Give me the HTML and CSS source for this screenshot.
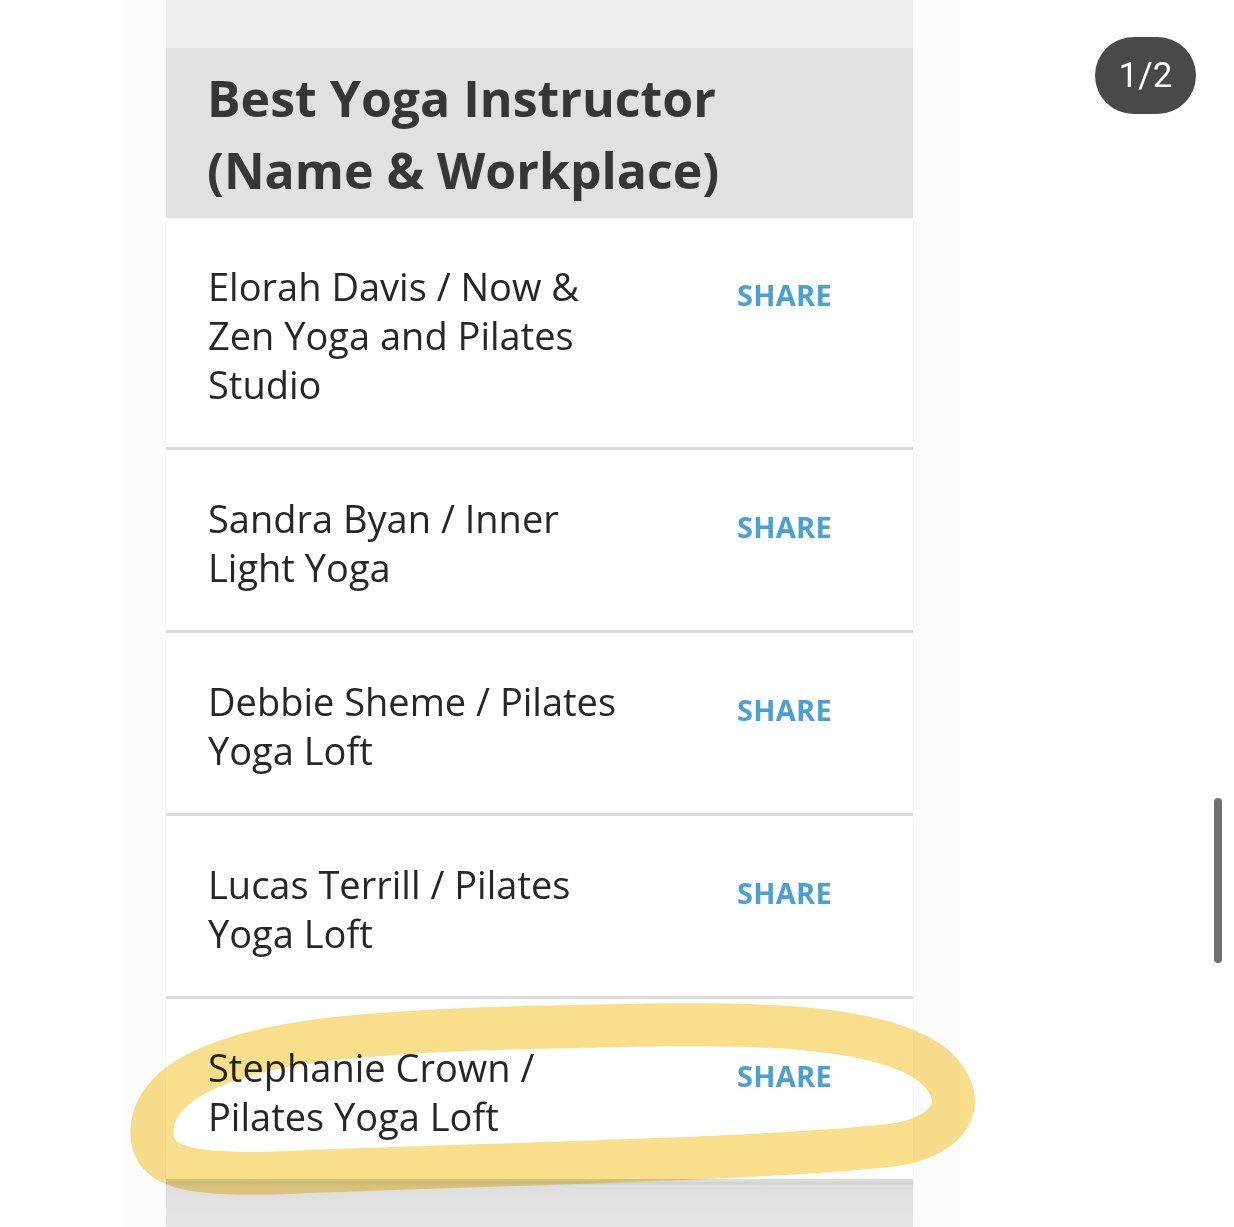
FILE: index.html
```html
<!DOCTYPE html>
<html lang="en">
<head>
<meta charset="utf-8">
<title>Best Yoga Instructor</title>
<link rel="stylesheet" href="styles.css">
</head>
<body>
<div class="stage">
  <div class="column">
    <div class="card">
      <div class="card-top"></div>
      <div class="card-header">
        <h1 class="title">Best Yoga Instructor (Name &amp; Workplace)</h1>
      </div>
      <div class="row">
        <div class="name">Elorah Davis / Now &amp; Zen Yoga and Pilates Studio</div>
        <div class="share">SHARE</div>
      </div>
      <div class="row">
        <div class="name">Sandra Byan / Inner Light Yoga</div>
        <div class="share">SHARE</div>
      </div>
      <div class="row">
        <div class="name">Debbie Sheme / Pilates Yoga Loft</div>
        <div class="share">SHARE</div>
      </div>
      <div class="row">
        <div class="name">Lucas Terrill / Pilates Yoga Loft</div>
        <div class="share">SHARE</div>
      </div>
      <div class="row">
        <div class="name">Stephanie Crown / Pilates Yoga Loft</div>
        <div class="share">SHARE</div>
      </div>
      <div class="card-bottom"></div>
    </div>
  </div>

  <div class="badge">1/2</div>
  <div class="scrollbar"></div>

  <svg class="highlight" width="1234" height="1227" viewBox="0 0 1234 1227" aria-hidden="true">
    <path d="M 600 1026 C 750 1022 882 1024 934 1066 C 968 1096 958 1132 900 1144 C 800 1158 500 1164 300 1172 C 180 1178 150 1166 152 1128 C 156 1088 205 1054 330 1039 C 430 1029 500 1028 600 1026 Z"
          fill="none" stroke="#f8da78" stroke-width="43" stroke-linecap="round" stroke-linejoin="round"/>
  </svg>
</div>
</body>
</html>
```

FILE: styles.css
```css
html, body {
  margin: 0;
  padding: 0;
  background: #ffffff;
}

.stage {
  position: relative;
  width: 1234px;
  height: 1227px;
  overflow: hidden;
  background: #ffffff;
  font-family: "Open Sans", "Noto Sans", sans-serif;
}

.column {
  margin-left: 123px;
  width: 837px;
  height: 1227px;
  background: #fbfbfb;
  padding-left: 43px;
  box-sizing: border-box;
}

.card {
  width: 747px;
  display: flex;
  flex-direction: column;
}

.card-top {
  height: 48px;
  background: #efefef;
}

.card-header {
  height: 170px;
  box-sizing: border-box;
  background: #e1e1e1;
  padding: 14px 0 0 41px;
}

.title {
  margin: 0;
  font-size: 50px;
  line-height: 72px;
  font-weight: 700;
  color: #363636;
  max-width: 600px;
}

.row {
  display: flex;
  align-items: flex-start;
  background: #ffffff;
  padding: 44px 0 38px 42px;
  border-bottom: 3px solid #dcdcdc;
  box-shadow: 0 1px 2px rgba(0, 0, 0, 0.05);
}

.name {
  flex: 0 0 430px;
  font-size: 38px;
  line-height: 49px;
  color: #262626;
  margin-right: 99px;
}

.share {
  margin-top: 8px;
  font-size: 29px;
  line-height: 49px;
  font-weight: 700;
  color: #4b9fd3;
  letter-spacing: 0.3px;
}

.card-bottom {
  height: 47px;
  background: linear-gradient(#cfcfcf 0, #dedede 4px, #e6e6e6 100%);
}

.badge {
  position: absolute;
  left: 1095px;
  top: 37px;
  width: 101px;
  height: 77px;
  border-radius: 39px;
  background: #494949;
  color: #ffffff;
  font-family: Roboto, "Noto Sans", sans-serif;
  font-size: 35px;
  line-height: 77px;
  text-align: center;
}

.scrollbar {
  position: absolute;
  left: 1214px;
  top: 798px;
  width: 8px;
  height: 165px;
  border-radius: 4px;
  background: #707070;
}

.highlight {
  position: absolute;
  left: 0;
  top: 0;
  pointer-events: none;
  mix-blend-mode: multiply;
  opacity: 0.85;
}
```
